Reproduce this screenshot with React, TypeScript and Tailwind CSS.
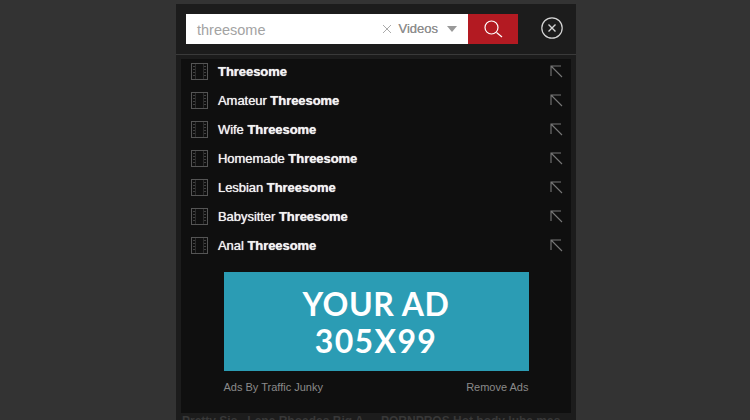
const font = { fontFamily: '"Liberation Sans", Arial, sans-serif' };

const items = [
  ["", "Threesome"],
  ["Amateur ", "Threesome"],
  ["Wife ", "Threesome"],
  ["Homemade ", "Threesome"],
  ["Lesbian ", "Threesome"],
  ["Babysitter ", "Threesome"],
  ["Anal ", "Threesome"],
];

function FilmIcon() {
  return (
    <svg width="17" height="17" viewBox="0 0 17 17" fill="none" className="shrink-0">
      <rect x="0.5" y="0.5" width="16" height="16" stroke="#555" />
      <path d="M4.5 1v15M12.5 1v15" stroke="#2c2c2c" />
      <path d="M3 3v1M3 6v1M3 9v1M3 12v1M14 3v1M14 6v1M14 9v1M14 12v1" stroke="#777" />
    </svg>
  );
}

function ArrowIcon() {
  return (
    <svg width="13" height="13" viewBox="0 0 13 13" fill="none" stroke="#777" strokeWidth="1.1">
      <path d="M1 11V1h10M1 1l11 11" />
    </svg>
  );
}

export default function App() {
  return (
    <div className="h-[420px] w-[750px] overflow-hidden bg-[#333333] flex" style={font}>
      <div className="w-[400px] h-[416px] ml-[176px] mt-[4px] shrink-0 bg-[#1c1c1c] flex flex-col overflow-hidden">
        <div className="h-[51px] shrink-0 border-b border-[#3a3a3a] flex items-start pl-[10px] pt-[10px]">
          <div className="w-[282px] h-[30px] bg-white flex items-center pl-[11px] pr-[11px]">
            <span className="text-[14.5px] text-[#a3a3a3] relative top-[2px]">threesome</span>
            <svg width="10" height="10" viewBox="0 0 10 10" stroke="#aaa" strokeWidth="1" className="ml-auto mr-[6px]">
              <path d="M1 1l8 8M9 1l-8 8" />
            </svg>
            <span className="text-[13px] text-[#8f8f8f] mr-[9px] [text-shadow:0_0_0.4px_#8f8f8f]">Videos</span>
            <span className="w-0 h-0 border-l-[5px] border-r-[5px] border-t-[6px] border-l-transparent border-r-transparent border-t-[#999]" />
          </div>
          <div className="w-[50px] h-[30px] bg-[#b31a22] flex items-center justify-center">
            <svg width="20" height="20" viewBox="0 0 20 20" fill="none" stroke="#fff" strokeWidth="1.2">
              <circle cx="8.5" cy="8.5" r="6.5" />
              <path d="M13.5 13.5l5.5 4.5" />
            </svg>
          </div>
          <svg width="22" height="22" viewBox="0 0 22 22" fill="none" stroke="#d5d5d5" className="ml-[23px] mt-[3px]">
            <circle cx="11" cy="11" r="10.2" strokeWidth="1.2" />
            <path d="M7.5 7.5l7 7M14.5 7.5l-7 7" strokeWidth="1.4" />
          </svg>
        </div>
        <div className="mt-[4px] mx-[5px] h-[354px] shrink-0 bg-[#0f0f0f] flex flex-col overflow-hidden">
          <div className="flex flex-col -mt-[2px]">
            {items.map(([a, b]) => (
              <div key={a + b} className="h-[29px] shrink-0 flex items-center pl-[10px] pr-[8px]">
                <FilmIcon />
                <span className="ml-[10px] text-[13px] text-[#f2f2f2] tracking-[-0.05px] [text-shadow:0_0_0.8px_#f2f2f2]">
                  {a}
                  <span className="font-bold">{b}</span>
                </span>
                <span className="ml-auto flex"><ArrowIcon /></span>
              </div>
            ))}
          </div>
          <div className="w-[305px] mx-auto mt-[12px]">
            <div className="h-[99px] bg-[#2b9cb4] flex flex-col items-center justify-center text-white font-bold text-[32px] leading-[37px]" style={{ fontFamily: 'Lato, sans-serif' }}>
              <span className="tracking-[0.6px]">YOUR AD</span>
              <span className="tracking-[1.4px]">305X99</span>
            </div>
            <div className="flex justify-between mt-[8px] text-[11px] text-[#8a8a8a]">
              <span>Ads By Traffic Junky</span>
              <span>Remove Ads</span>
            </div>
          </div>
        </div>
        <div className="flex pl-[6px] pt-[1px] text-[12px] font-bold text-[#383838] leading-[14px] whitespace-nowrap">
          <span className="w-[199px]">Pretty Sis , Lena Rhoades Big A</span>
          <span>PORNPROS Hot body lube mas</span>
        </div>
      </div>
    </div>
  );
}
